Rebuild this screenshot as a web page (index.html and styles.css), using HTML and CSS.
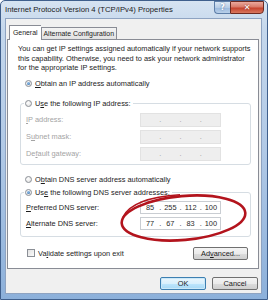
FILE: index.html
```html
<!DOCTYPE html>
<html>
<head>
<meta charset="utf-8">
<link rel="stylesheet" href="styles.css">
</head>
<body>
<div class="window">
  <div class="titlebar">
    <span class="title">Internet Protocol Version 4 (TCP/IPv4) Properties</span>
    <div class="caption">
      <span class="cap-btn help">?</span>
      <span class="cap-btn close">&#x2715;</span>
    </div>
  </div>
  <div class="client">
    <div class="tabs">
      <div class="tab active">General</div>
      <div class="tab">Alternate Configuration</div>
    </div>
    <div class="panel">
      <p class="intro">You can get IP settings assigned automatically if your network supports<br>this capability. Otherwise, you need to ask your network administrator<br>for the appropriate IP settings.</p>
      <div class="row radio-row first"><span class="radio on"></span><span><u>O</u>btain an IP address automatically</span></div>
      <fieldset class="group ip">
        <legend class="row"><span class="radio"></span><span>U<u>s</u>e the following IP address:</span></legend>
        <div class="fields">
          <span class="label disabled"><u>I</u>P address:</span>
          <span class="field dis"><i></i><b>.</b><i></i><b>.</b><i></i><b>.</b><i></i></span>
          <span class="label disabled">S<u>u</u>bnet mask:</span>
          <span class="field dis"><i></i><b>.</b><i></i><b>.</b><i></i><b>.</b><i></i></span>
          <span class="label disabled">De<u>f</u>ault gateway:</span>
          <span class="field dis"><i></i><b>.</b><i></i><b>.</b><i></i><b>.</b><i></i></span>
        </div>
      </fieldset>
      <div class="row radio-row dns-auto"><span class="radio"></span><span>O<u>b</u>tain DNS server address automatically</span></div>
      <fieldset class="group dns">
        <legend class="row"><span class="radio on"></span><span>Us<u>e</u> the following DNS server addresses:</span></legend>
        <div class="fields">
          <span class="label"><u>P</u>referred DNS server:</span>
          <span class="field"><i>85</i><b>.</b><i>255</i><b>.</b><i>112</i><b>.</b><i>100</i></span>
          <span class="label"><u>A</u>lternate DNS server:</span>
          <span class="field"><i>77</i><b>.</b><i>67</i><b>.</b><i>83</i><b>.</b><i>100</i></span>
        </div>
      </fieldset>
      <div class="bottom-row">
        <div class="row"><span class="check"></span><span>Va<u>l</u>idate settings upon exit</span></div>
        <span class="btn">Ad<u>v</u>anced...</span>
      </div>
    </div>
    <div class="footer">
      <span class="btn default">OK</span>
      <span class="btn">Cancel</span>
    </div>
  </div>
  <svg class="mark" width="140" height="60" viewBox="0 0 140 60">
    <ellipse cx="65.5" cy="25" rx="62" ry="22" transform="rotate(-5 65.5 25)" fill="none" stroke="#b3141d" stroke-width="2.6"/>
    <path d="M5 24 C 12 10, 34 3.5, 62 1.8" fill="none" stroke="#b3141d" stroke-width="1.5"/>
  </svg>
</div>
</body>
</html>
```
FILE: styles.css
```css
* { box-sizing: border-box; }
html, body { margin: 0; padding: 0; }
body {
  width: 268px;
  height: 300px;
  overflow: hidden;
  background: #ffffff;
  font-family: "Liberation Sans", Arial, sans-serif;
  font-size: 7.4px;
  color: #1c1c1c;
}
u { text-decoration: underline; text-underline-offset: 1px; }

.window {
  position: relative;
  width: 268px;
  height: 300px;
  display: flex;
  flex-direction: column;
  background: linear-gradient(180deg, #d6e3f1 0%, #c4d7ec 10%, #b1c9e6 50%, #8cb0da 100%);
  border: 1px solid #3f5f8c;
  border-radius: 5px 5px 0 0;
}

.titlebar {
  height: 17px;
  display: flex;
  justify-content: space-between;
  align-items: flex-start;
  padding-left: 4px;
}
.title {
  font-size: 7.7px;
  line-height: 17px;
  color: #1a1a1a;
}
.caption { display: flex; margin-right: 3px; }
.cap-btn {
  height: 13px;
  display: flex;
  align-items: center;
  justify-content: center;
  font-weight: bold;
  font-family: "DejaVu Sans", sans-serif;
}
.help {
  width: 16px;
  font-size: 8px;
  color: #ffffff;
  background: linear-gradient(180deg, #dbe7f4 0%, #b7cde6 50%, #9ab8dc 51%, #b8d0ea 100%);
  border: 1px solid #5d7ea8;
  border-right: none;
  border-radius: 0 0 0 4px;
  text-shadow: 0 0 2px #4a6a95;
}
.close {
  width: 34px;
  font-size: 8px;
  color: #ffffff;
  background: linear-gradient(180deg, #eaa99e 0%, #d97a69 45%, #c6432e 55%, #d8785f 100%);
  border: 1px solid #6e2b22;
  border-radius: 0 0 4px 0;
  text-shadow: 0 0 2px #7a1f14;
}

.client {
  flex: 1;
  margin: 0 5px 5px 4px;
  background: #f0f0f0;
  border: 1px solid #8ea3c1;
  padding: 6px 2px 0 1px;
  display: flex;
  flex-direction: column;
}

.tabs {
  display: flex;
  align-items: flex-end;
  margin-left: 2px;
  height: 14px;
}
.tab {
  height: 12px;
  padding: 0 2px;
  font-size: 6.9px;
  line-height: 11px;
  border: 1px solid #898c95;
  border-bottom: none;
  background: linear-gradient(180deg, #f3f3f3, #e2e2e2);
  white-space: nowrap;
}
.tab.active {
  height: 15px;
  margin-bottom: -1px;
  position: relative;
  z-index: 1;
  background: #ffffff;
  line-height: 13px;
  padding: 0 3px;
  border-right: none;
}

.panel {
  height: 230px;
  background: #ffffff;
  border: 1px solid #898c95;
  padding: 4px 7px 0 10px;
  display: flex;
  flex-direction: column;
}

.intro {
  margin: 0;
  line-height: 9.6px;
  white-space: nowrap;
}

.row {
  display: flex;
  align-items: center;
  gap: 3px;
  height: 10px;
  white-space: nowrap;
}
.radio-row { padding-left: 7px; }
.radio-row.first { margin-top: 6px; }
.radio-row.dns-auto { margin-top: 10px; }

.radio {
  width: 7px;
  height: 7px;
  border-radius: 50%;
  border: 1px solid #8b8f96;
  background: radial-gradient(circle at 40% 35%, #ffffff, #dcdcdc);
  flex: none;
  display: flex;
  align-items: center;
  justify-content: center;
}
.radio.on::after {
  content: "";
  width: 3px;
  height: 3px;
  border-radius: 50%;
  background: radial-gradient(circle at 40% 35%, #8fc1ea, #2c64a8);
}
.check {
  width: 8px;
  height: 8px;
  border: 1px solid #8b8f96;
  background: linear-gradient(135deg, #e1e1e1, #fbfbfb);
  flex: none;
}

.group {
  margin: 10px 0 0 2px;
  border: 1px solid #d6dde3;
  border-radius: 3px;
  padding: 4px 0 3px 5px;
  min-width: 0;
}
.group legend {
  padding: 0 2px 0 1px;
  margin-left: -2px;
}
.group.dns { margin-top: 3px; padding: 3px 0 6px 5px; }

.fields {
  display: grid;
  grid-template-columns: 114px 81px;
  row-gap: 3px;
  align-items: center;
}
.label { white-space: nowrap; }
.label.disabled { color: #a4a4a4; }

.field {
  height: 14px;
  display: grid;
  grid-template-columns: 1fr 2px 1fr 2px 1fr 2px 1fr;
  align-items: center;
  border: 1px solid #c9cdd2;
  background: #ffffff;
  color: #2a2a2a;
}
.group.dns .field { height: 13px; }
.field i { font-style: normal; text-align: center; }
.field b { font-weight: normal; text-align: center; }
.field.dis {
  background: #eeeeee;
  border-color: #e2e2e2;
  color: #9a9a9a;
}

.bottom-row {
  margin-top: 10px;
  display: flex;
  justify-content: space-between;
  align-items: center;
  padding: 0 3px 0 9px;
}

.btn {
  height: 13px;
  display: flex;
  align-items: center;
  justify-content: center;
  border: 1px solid #707070;
  border-radius: 2px;
  background: linear-gradient(180deg, #f4f4f4 0%, #ebebeb 50%, #dddddd 51%, #cfcfcf 100%);
  white-space: nowrap;
  padding: 0 5px;
}
.bottom-row .btn { width: 55px; }

.footer {
  display: flex;
  justify-content: flex-end;
  gap: 6px;
  margin-top: 8px;
  padding-right: 1px;
}
.footer .btn { width: 46px; }
.btn.default {
  border-color: #3c7fb1;
  background: linear-gradient(180deg, #eaf6fd 0%, #d9f0fc 50%, #bee6fd 51%, #a7d9f5 100%);
  box-shadow: inset 0 0 0 1px #cbe8f8;
}

.mark {
  position: absolute;
  left: 117px;
  top: 192px;
  pointer-events: none;
}
```
